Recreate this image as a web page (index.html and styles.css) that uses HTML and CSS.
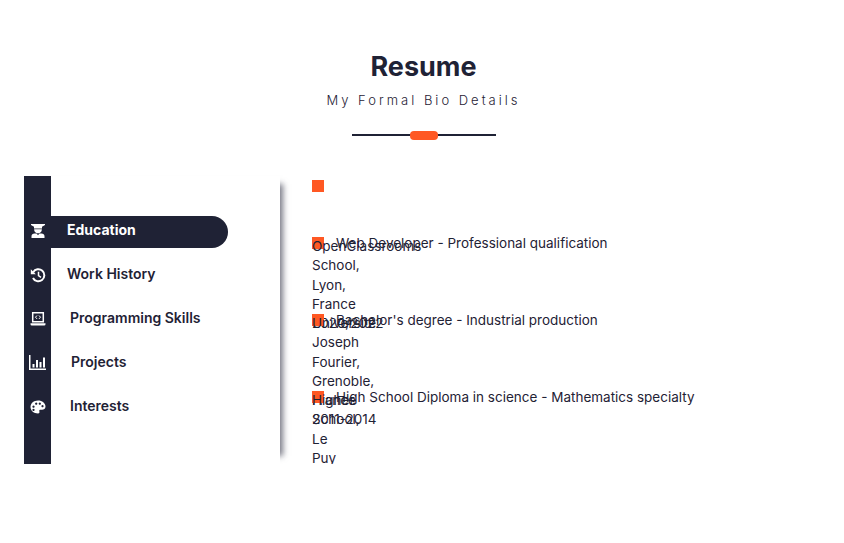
FILE: index.html
```html
<!DOCTYPE html>
<html lang="en">
    <head>
        <meta charset="UTF-8" />
        <meta name="viewport" content="width=device-width, initial-scale=1.0" />
        <title>Resume</title>
        <link rel="stylesheet" href="styles.css">
    </head>
    <body>
        <section class="heading">
            <h1>Resume</h1>
            <p class="subtitle">My Formal Bio Details</p>
            <div class="divider"><span></span></div>
        </section>
        <section class="resume">
            <nav class="bar">
                <a class="item active">
                    <span class="icon">
                        <svg viewBox="0 0 16 16" width="16" height="16"><path d="M1 1h14v1L12 3.800V5.500H4V3.800L1 2z M4.200 6.300h7.600v.7c0 1.900-1.600 3.100-3.800 3.100S4.200 8.900 4.200 7z M4.500 10.600h7c1.700 0 3 1.100 3 2.700V15h-13v-1.700c0-1.600 1.300-2.700 3-2.700z" fill="#fff"/><path d="M6.500 10.600L8 12.200l1.500-1.600z" fill="#1f2235"/></svg>
                    </span>
                    <span class="label">Education</span>
                </a>
                <a class="item">
                    <span class="icon">
                        <svg viewBox="0 0 16 16" width="16" height="16"><path d="M3.200 5.200A6 6 0 1 1 3 11" fill="none" stroke="#fff" stroke-width="2"/><path d="M.8 2.200l5 5H.8z" fill="#fff"/><path d="M8.500 4.800v3.700l2.500 1.800" fill="none" stroke="#fff" stroke-width="1.500"/></svg>
                    </span>
                    <span class="label">Work History</span>
                </a>
                <a class="item item-skills">
                    <span class="icon">
                        <svg viewBox="0 0 16 16" width="16" height="16"><path d="M2.700 1.800h10.600v9H2.700z" fill="none" stroke="#fff" stroke-width="1.500"/><path d="M.5 12.300h15v.9a1.300 1.300 0 0 1-1.300 1.300H1.800a1.300 1.300 0 0 1-1.300-1.300z" fill="#fff"/><path d="M7 4.500L5.500 6.200 7 7.900M9 4.500l1.500 1.700L9 7.900" fill="none" stroke="#fff" stroke-width="1"/></svg>
                    </span>
                    <span class="label">Programming Skills</span>
                </a>
                <a class="item item-projects">
                    <span class="icon">
                        <svg viewBox="0 0 17 15" width="17" height="15"><path d="M0 0h1.500v13.500H17V15H0z M3.500 9h2v3.500h-2z M7 5h2v7.500H7z M10.500 7h2v5.500h-2z M14 2.500h2v10h-2z" fill="#fff"/></svg>
                    </span>
                    <span class="label">Projects</span>
                </a>
                <a class="item item-interests">
                    <span class="icon">
                        <svg viewBox="0 0 16 16" width="16" height="16"><path fill-rule="evenodd" d="M8 1.500c4.200 0 7.500 2.700 7.500 6 0 2.200-1.700 3.300-3.500 3.300H10.500c-1 0-1.500.7-1.200 1.500.4 1 .2 2.200-1.300 2.200C4 14.500.5 11.700.5 8S3.800 1.500 8 1.500z M3.500 6.500a1.100 1.100 0 1 0 .01 0z M6.200 3.500a1.100 1.100 0 1 0 .01 0z M9.800 3.500a1.100 1.100 0 1 0 .01 0z M12.500 6a1.100 1.100 0 1 0 .01 0z M3.500 9.800a1.100 1.100 0 1 0 .01 0z" fill="#fff"/></svg>
                    </span>
                    <span class="label">Interests</span>
                </a>
            </nav>
            <div class="timeline">
                <span class="mark first"></span>
                <div class="entry">
                    <span class="mark"></span>
                    <span class="title">Web Developer - Professional qualification</span>
                    <div class="place">OpenClassrooms School, Lyon, France</div>
                    <div class="date">2020/2022</div>
                </div>
                <div class="entry">
                    <span class="mark"></span>
                    <span class="title">Bachelor's degree - Industrial production</span>
                    <div class="place">Université Joseph Fourier, Grenoble, France</div>
                    <div class="date">2011-2014</div>
                </div>
                <div class="entry">
                    <span class="mark"></span>
                    <span class="title">High School Diploma in science - Mathematics specialty</span>
                    <div class="place">Higher School, Le Puy</div>
                </div>
            </div>
        </section>
    </body>
</html>
```

FILE: styles.css
```css
html {
    font-family: Inter, 'Open Sans', sans-serif;
}
body {
    margin: 0;
    color: #1f2235;
    background-color: #fff;
}
.heading {
    padding: 50px 0 0 3px;
    text-align: center;
}
.heading h1 {
    margin: 0;
    height: 34px;
    font-size: 27px;
    line-height: 34px;
    font-weight: 700;
}
.subtitle {
    margin: 7px 0 0;
    height: 18px;
    font-size: 13px;
    line-height: 18px;
    letter-spacing: 3px;
    font-weight: 300;
}
.divider {
    position: relative;
    width: 144px;
    height: 2px;
    margin: 25px auto 0;
    background-color: #1f2235;
}
.divider span {
    position: absolute;
    left: 58px;
    top: -3px;
    width: 28px;
    height: 9px;
    border-radius: 4px;
    background-color: #ff5823;
}
.resume {
    display: flex;
    margin: 40px 0 0 24px;
    height: 288px;
}
.bar {
    width: 256px;
    padding-top: 40px;
    box-sizing: border-box;
    background: linear-gradient(to right, #1f2235 27px, #fff 27px);
    box-shadow: 11px 0 6px -8px rgba(31, 34, 53, 0.6);
}
.item {
    display: flex;
    align-items: center;
    box-sizing: border-box;
    width: 204px;
    height: 32px;
    margin-bottom: 12px;
    padding-bottom: 3px;
    font-size: 14px;
    font-weight: 600;
}
.item.active {
    color: #fff;
    font-weight: 700;
    background-color: #1f2235;
    border-radius: 0 16px 16px 0;
}
.label {
    margin-bottom: 2px;
}
.icon {
    display: flex;
    justify-content: center;
    width: 27px;
    margin-right: 16px;
}
.item-skills .icon,
.item-interests .icon {
    margin-right: 19px;
}
.item-projects .icon {
    margin-right: 20px;
}
.timeline {
    margin-left: 32px;
    padding-top: 4px;
    font-size: 13.5px;
    line-height: 19.3px;
}
.mark {
    position: absolute;
    display: block;
    width: 12px;
    height: 12px;
    background-color: #ff5823;
}
.mark.first {
    position: static;
    margin-bottom: 45px;
}
.entry {
    position: relative;
    height: 77px;
}
.title {
    position: absolute;
    left: 24px;
    top: -3px;
    white-space: nowrap;
}
.place {
    position: relative;
    width: 0;
}
.date {
    position: relative;
    white-space: nowrap;
}
```
